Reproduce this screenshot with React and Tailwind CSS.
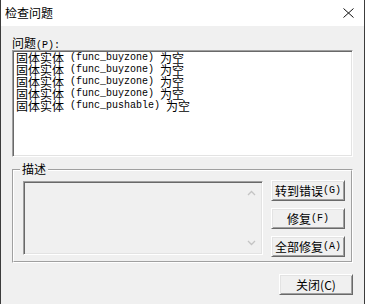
const cjk = "font-['Noto_Sans_CJK_SC',sans-serif]";
const mono = "font-['Liberation_Mono',monospace]";

const problems = ['func_buyzone', 'func_buyzone', 'func_buyzone', 'func_buyzone', 'func_pushable'];

function Button({ label, hot }) {
  return (
    <button className="w-[74px] h-[21px] bg-[#f0f0f0] border border-t-white border-l-white border-b-[#696969] border-r-[#696969] shadow-[inset_1px_1px_#e3e3e3,inset_-1px_-1px_#a0a0a0] flex items-center justify-center text-[12px] leading-none text-black">
      <span className={cjk}>{label}</span>
      <span className={`${mono} text-[10px]`}>({hot})</span>
    </button>
  );
}

function Chevron({ up }) {
  return (
    <svg width="9" height="6" viewBox="0 0 9 6" className="text-[#c4c4c4]">
      <path d={up ? 'M1 5 L4.5 1.5 L8 5' : 'M1 1 L4.5 4.5 L8 1'} fill="none" stroke="currentColor" strokeWidth="1.3" />
    </svg>
  );
}

export default function App() {
  return (
    <div className="w-[365px] h-[304px] flex flex-col border-l border-r border-[#3c3c3c] bg-[#f0f0f0] overflow-hidden">
      {/* title bar */}
      <div className="h-[26px] bg-white flex items-center justify-between pl-[4px] pr-[10px] shrink-0">
        <span className={`${cjk} text-[12px] text-black`}>检查问题</span>
        <svg width="11" height="10" viewBox="0 0 11 10">
          <path d="M0.5 0.5 L10.5 9.5 M10.5 0.5 L0.5 9.5" stroke="#111" strokeWidth="1" fill="none" />
        </svg>
      </div>

      <div className="flex flex-col px-[11px] pt-[9px]">
        <div className={`${cjk} text-[12px] h-[15px] leading-[15px] text-black`}>
          问题<span className={`${mono} text-[10px]`}>(P):</span>
        </div>

        {/* problem list */}
        <div className="h-[107px] bg-white border border-t-[#a0a0a0] border-l-[#a0a0a0] border-b-white border-r-white shadow-[inset_1px_1px_#696969,inset_-1px_-1px_#e3e3e3] pl-[3px] pt-[1px]">
          {problems.map((p, i) => (
            <div key={i} className="h-[12px] leading-[12px] whitespace-nowrap text-black flex items-center overflow-visible">
              <span className={`${cjk} text-[12px] inline-block h-[12px] leading-[12px]`}>固体实体</span>
              <span className={`${mono} text-[10px] whitespace-pre inline-block h-[12px] leading-[12px]`}> ({p}) </span>
              <span className={`${cjk} text-[12px] inline-block h-[12px] leading-[12px]`}>为空</span>
            </div>
          ))}
        </div>

        {/* description group */}
        <div className="relative mt-[12px] h-[94px] border border-t-[#a0a0a0] border-l-[#a0a0a0] border-b-white border-r-white">
          <span className={`${cjk} absolute left-[7px] top-[-8px] px-[2px] bg-[#f0f0f0] text-[12px] leading-[14px] text-black`}>描述</span>
          <div className="h-full border border-t-white border-l-white border-b-[#a0a0a0] border-r-[#a0a0a0] flex pl-[9px] pt-[10px] pr-[6px]">
            <div className="w-[240px] h-[74px] border border-t-[#a0a0a0] border-l-[#a0a0a0] border-b-white border-r-white shadow-[inset_1px_1px_#696969,inset_-1px_-1px_#e3e3e3] flex justify-end">
              <div className="w-[17px] flex flex-col items-center justify-between py-[8px] mr-[2px]">
                <Chevron up />
                <Chevron />
              </div>
            </div>
            <div className="ml-auto flex flex-col gap-[7px] -mt-[1px]">
              <Button label="转到错误" hot="G" />
              <Button label="修复" hot="F" />
              <Button label="全部修复" hot="A" />
            </div>
          </div>
        </div>

        <div className="flex justify-end mt-[11px]">
          <button className="w-[74px] h-[21px] bg-[#f0f0f0] border border-t-white border-l-white border-b-[#696969] border-r-[#696969] shadow-[inset_1px_1px_#e3e3e3,inset_-1px_-1px_#a0a0a0] flex items-center justify-center text-[12px] leading-none text-black">
            <span className={cjk}>关闭(C)</span>
          </button>
        </div>
      </div>
    </div>
  );
}
